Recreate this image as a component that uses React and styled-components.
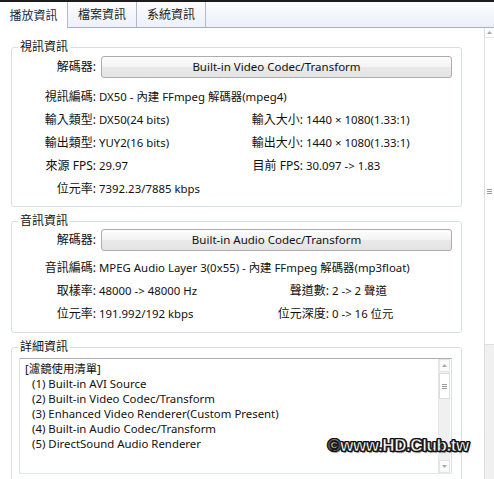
import React from 'react';
import styled, { createGlobalStyle } from 'styled-components';

const Global = createGlobalStyle`
  html, body { margin: 0; padding: 0; background: #fff; }
  body {
    font-family: "Noto Sans", "Noto Sans CJK TC", sans-serif;
    font-size: 12px;
    color: #111;
  }
`;

const Window = styled.div`
  position: relative;
  width: 494px;
  height: 479px;
  overflow: hidden;
  display: flex;
  flex-direction: column;
  background: #fff;
`;

const TopEdge = styled.div`
  flex: none;
  height: 2px;
  background: #1c1c1c;
`;

const TabStrip = styled.div`
  flex: none;
  display: flex;
  height: 25px;
  background: linear-gradient(#fdfdff, #eceffa);
  border-bottom: 1px solid #a6adc4;
`;

const Tab = styled.div`
  box-sizing: border-box;
  width: ${p => p.$w}px;
  height: ${p => (p.$active ? 26 : 25)}px;
  display: flex;
  align-items: center;
  justify-content: center;
  line-height: 16px;
  border-right: 1px solid #b3b9cf;
  background: ${p => (p.$active ? '#fff' : 'linear-gradient(#fdfdff, #eef0fa)')};
  color: ${p => (p.$active ? '#1a2a4a' : '#222')};
  padding-top: 1px;
  position: relative;
  z-index: ${p => (p.$active ? 1 : 0)};
`;

const Body = styled.div`
  flex: 1;
  display: flex;
  min-height: 0;
`;

const Content = styled.div`
  flex: 1;
  padding: 11px 22px 0 11px;
  min-width: 0;
`;

const ScrollBar = styled.div`
  box-sizing: border-box;
  flex: none;
  width: 10px;
  border-left: 1px solid #dedede;
  display: flex;
  flex-direction: column;
  background: #f0f0f0;
`;

const ScrollArrow = styled.div`
  flex: none;
  height: ${p => p.$h}px;
  display: flex;
  align-items: center;
  justify-content: center;
  background: #fff;
  border-bottom: 1px solid #e6e6e6;
  box-sizing: border-box;
`;

const Thumb = styled.div`
  flex: none;
  box-sizing: border-box;
  height: ${p => p.$h}px;
  background: #fff;
  border-bottom: 1px solid #e0e0e0;
  display: flex;
  align-items: center;
  justify-content: center;
`;

const Grip = styled.div`
  width: 5px;
  height: 5px;
  background: repeating-linear-gradient(#9a9a9a 0 1px, transparent 1px 2px);
`;

const Group = styled.fieldset`
  margin: 0 0 6px 0;
  padding: ${p => p.$pt}px 9px ${p => p.$pb}px 0;
  border: 1px solid #d5dfe5;
  border-radius: 3px;
  min-width: 0;
`;

const Legend = styled.legend`
  margin-left: 6px;
  padding: 0 2px;
  line-height: 16px;
  font-size: 12px;
  color: #111;
`;

const ButtonRow = styled.div`
  display: flex;
  align-items: center;
  height: 22px;
`;

const Label = styled.div`
  text-align: right;
  white-space: nowrap;
  line-height: 16px;
  font-size: 12px;
  ${p => (p.$fixed ? 'width: 84px; flex: none;' : '')}
`;

const WideButton = styled.div`
  flex: 1;
  box-sizing: border-box;
  height: 22px;
  margin-left: 5px;
  border: 1px solid #acacac;
  border-radius: 3px;
  background: linear-gradient(#fdfdfd, #f3f3f3 50%, #e9e9e9 51%, #e4e4e4);
  display: flex;
  align-items: center;
  justify-content: center;
  line-height: 16px;
  font-size: 11.5px;
  color: #111;
`;

const InfoGrid = styled.div`
  display: grid;
  grid-template-columns: 84px ${p => p.$c2}px 55px 1fr;
  grid-auto-rows: 23px;
  align-items: center;
  margin-top: ${p => p.$mt}px;
`;

const Value = styled.div`
  padding-left: 3px;
  white-space: nowrap;
  line-height: 16px;
  font-size: 11.4px;
  ${p => (p.$wide ? 'grid-column: 2 / -1;' : '')}
`;

const TextBox = styled.div`
  box-sizing: border-box;
  height: 116px;
  margin: 3px 0 0 7px;
  border: 1px solid #dbdfe6;
  border-top-color: #abadb3;
  border-bottom-color: #e3e9ef;
  display: flex;
`;

const TextLines = styled.div`
  flex: 1;
  padding: 2px 0 0 5px;
  min-width: 0;
  font-size: 11.4px;
`;

const Line = styled.div`
  line-height: 15px;
  height: 15px;
  white-space: nowrap;
  padding-left: ${p => (p.$indent ? 7 : 0)}px;
`;

const BoxScroll = styled.div`
  flex: none;
  width: 12px;
  margin: 0 1px 0 0;
  display: flex;
  flex-direction: column;
  background: #f0f0f0;
  border-left: 1px solid #e6e6e6;
  box-sizing: border-box;
`;

const BoxArrow = styled.div`
  flex: none;
  height: 13px;
  display: flex;
  align-items: center;
  justify-content: center;
  background: #fafafa;
  border: 1px solid #e4e4e4;
  box-sizing: border-box;
`;

const BoxThumb = styled.div`
  flex: none;
  height: 26px;
  margin-top: 1px;
  background: #fff;
  border: 1px solid #dcdcdc;
  box-sizing: border-box;
  display: flex;
  align-items: center;
  justify-content: center;
`;

const Spacer = styled.div`
  flex: 1;
`;

const Watermark = styled.div`
  position: absolute;
  left: 328px;
  top: 436px;
  font-family: "Liberation Sans", Arial, sans-serif;
  font-weight: bold;
  font-size: 17px;
  letter-spacing: -0.4px;
  line-height: 20px;
  color: #fff;
  -webkit-text-stroke: 0.6px #111;
  text-shadow:
    -1px -1px 0 #111, 1px -1px 0 #111, -1px 1px 0 #111, 1px 1px 0 #111,
    0 -1.4px 0 #111, 0 1.4px 0 #111, -1.4px 0 0 #111, 1.4px 0 0 #111,
    1px 2px 1px rgba(0,0,0,0.5);
  white-space: nowrap;
`;

const Arrow = ({ up }) => (
  <svg width="5" height="3" viewBox="0 0 5 3">
    <polygon points={up ? '0,3 5,3 2.5,0' : '0,0 5,0 2.5,3'} fill="#a8a8a8" />
  </svg>
);

export default function App() {
  return (
    <Window>
      <Global />
      <TopEdge />
      <TabStrip>
        <Tab $w={68} $active>播放資訊</Tab>
        <Tab $w={69}>檔案資訊</Tab>
        <Tab $w={69}>系統資訊</Tab>
      </TabStrip>
      <Body>
        <Content>
          <Group $pt={1} $pb={6}>
            <Legend>視訊資訊</Legend>
            <ButtonRow>
              <Label $fixed>解碼器:</Label>
              <WideButton>Built-in Video Codec/Transform</WideButton>
            </ButtonRow>
            <InfoGrid $c2={152} $mt={7}>
              <Label>視訊編碼:</Label>
              <Value $wide>DX50 - 內建 FFmpeg 解碼器(mpeg4)</Value>
              <Label>輸入類型:</Label>
              <Value>DX50(24 bits)</Value>
              <Label>輸入大小:</Label>
              <Value>1440 × 1080(1.33:1)</Value>
              <Label>輸出類型:</Label>
              <Value>YUY2(16 bits)</Value>
              <Label>輸出大小:</Label>
              <Value>1440 × 1080(1.33:1)</Value>
              <Label>來源 FPS:</Label>
              <Value>29.97</Value>
              <Label>目前 FPS:</Label>
              <Value>30.097 -&gt; 1.83</Value>
              <Label>位元率:</Label>
              <Value $wide>7392.23/7885 kbps</Value>
            </InfoGrid>
          </Group>
          <Group $pt={0} $pb={7}>
            <Legend>音訊資訊</Legend>
            <ButtonRow>
              <Label $fixed>解碼器:</Label>
              <WideButton>Built-in Audio Codec/Transform</WideButton>
            </ButtonRow>
            <InfoGrid $c2={178} $mt={5}>
              <Label>音訊編碼:</Label>
              <Value $wide>MPEG Audio Layer 3(0x55) - 內建 FFmpeg 解碼器(mp3float)</Value>
              <Label>取樣率:</Label>
              <Value>48000 -&gt; 48000 Hz</Value>
              <Label>聲道數:</Label>
              <Value>2 -&gt; 2 聲道</Value>
              <Label>位元率:</Label>
              <Value>191.992/192 kbps</Value>
              <Label>位元深度:</Label>
              <Value>0 -&gt; 16 位元</Value>
            </InfoGrid>
          </Group>
          <Group $pt={0} $pb={20}>
            <Legend>詳細資訊</Legend>
            <TextBox>
              <TextLines>
                <Line>[濾鏡使用清單]</Line>
                <Line $indent>(1) Built-in AVI Source</Line>
                <Line $indent>(2) Built-in Video Codec/Transform</Line>
                <Line $indent>(3) Enhanced Video Renderer(Custom Present)</Line>
                <Line $indent>(4) Built-in Audio Codec/Transform</Line>
                <Line $indent>(5) DirectSound Audio Renderer</Line>
              </TextLines>
              <BoxScroll>
                <BoxArrow><Arrow up /></BoxArrow>
                <BoxThumb><Grip /></BoxThumb>
                <Spacer />
                <BoxArrow><Arrow /></BoxArrow>
              </BoxScroll>
            </TextBox>
          </Group>
        </Content>
        <ScrollBar>
          <ScrollArrow $h={10}><Arrow up /></ScrollArrow>
          <Thumb $h={307}><Grip /></Thumb>
        </ScrollBar>
      </Body>
      <Watermark>©www.HD.Club.tw</Watermark>
    </Window>
  );
}
